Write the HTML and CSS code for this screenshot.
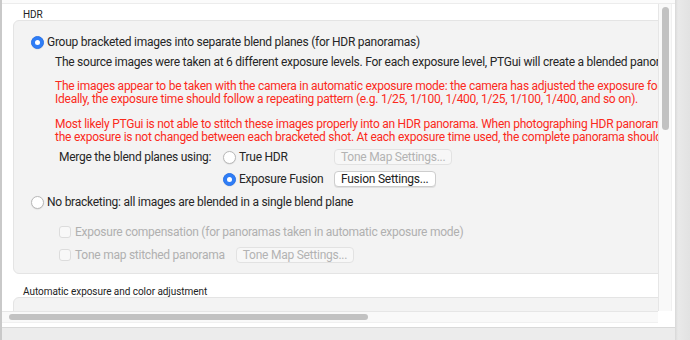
FILE: index.html
```html
<!DOCTYPE html>
<html>
<head>
<meta charset="utf-8">
<link rel="stylesheet" href="styles.css">
</head>
<body>
<div class="window">
  <div class="main">
    <div class="topline"></div>
    <div class="scrollarea">
      <div class="viewport">
        <div class="content">
          <div class="section-label">HDR</div>
          <div class="groupbox">
            <div class="row opt"><span class="radio on"></span><span>Group bracketed images into separate blend planes (for HDR panoramas)</span></div>
            <div class="info src">The source images were taken at 6 different exposure levels. For each exposure level, PTGui will create a blended panorama.</div>
            <div class="info warn first">The images appear to be taken with the camera in automatic exposure mode: the camera has adjusted the exposure for each shot.<br>Ideally, the exposure time should follow a repeating pattern (e.g. 1/25, 1/100, 1/400, 1/25, 1/100, 1/400, and so on).</div>
            <div class="info warn second">Most likely PTGui is not able to stitch these images properly into an HDR panorama. When photographing HDR panoramas, make sure<br>the exposure is not changed between each bracketed shot. At each exposure time used, the complete panorama should be covered.</div>
            <div class="merge">
              <span class="merge-label">Merge the blend planes using:</span>
              <span class="row"><span class="radio"></span><span>True HDR</span></span>
              <span class="btn disabled">Tone Map Settings...</span>
              <span></span>
              <span class="row"><span class="radio on"></span><span>Exposure Fusion</span></span>
              <span class="btn">Fusion Settings...</span>
            </div>
            <div class="row opt nobr"><span class="radio"></span><span>No bracketing: all images are blended in a single blend plane</span></div>
            <div class="row check expc"><span class="checkbox"></span><span>Exposure compensation (for panoramas taken in automatic exposure mode)</span></div>
            <div class="row check tmap"><span class="checkbox"></span><span>Tone map stitched panorama</span><span class="btn disabled">Tone Map Settings...</span></div>
          </div>
          <div class="section-label second">Automatic exposure and color adjustment</div>
          <div class="groupbox tall"></div>
        </div>
      </div>
      <div class="vscroll"><div class="vtrack"><div class="vthumb"></div></div></div>
    </div>
    <div class="hrow">
      <div class="htrack"><div class="hthumb"></div></div>
      <div class="corner"></div>
    </div>
    <div class="bottombar"></div>
  </div>
  <div class="rightedge"></div>
</div>
</body>
</html>
```

FILE: styles.css
```css
* { box-sizing: border-box; }
html, body { margin: 0; padding: 0; }
body {
  width: 690px;
  height: 340px;
  overflow: hidden;
  background: #fff;
  font-family: Roboto, "Liberation Sans", Arial, sans-serif;
  color: #262626;
}
.window {
  display: flex;
  width: 690px;
  height: 340px;
}
.main {
  width: 675px;
  height: 340px;
  display: flex;
  flex-direction: column;
  border-left: 2px solid #c9c9c9;
}
.topline {
  height: 4px;
  flex: none;
  background: #fbfbfb;
  border-bottom: 1px solid #ececec;
}
.scrollarea {
  height: 307px;
  flex: none;
  display: flex;
}
.viewport {
  width: 656px;
  height: 307px;
  overflow: hidden;
  background: #fff;
}
.content {
  width: 760px;
  padding-left: 11px;
}
.section-label {
  font-size: 10px;
  line-height: 11px;
  height: 11px;
  margin-top: 5px;
  padding-left: 10px;
  color: #222;
  letter-spacing: -0.05px;
}
.section-label.second { margin-top: 12px; }
.groupbox {
  width: 740px;
  background: #f3f3f3;
  border: 1px solid #e4e4e4;
  border-radius: 6px;
  padding: 14px 0 10px 0;
  font-size: 12px;
  line-height: 14px;
  letter-spacing: -0.25px;
  white-space: nowrap;
}
.groupbox.tall { height: 60px; }
.row {
  display: flex;
  align-items: center;
  height: 14px;
}
.opt { padding-left: 17px; gap: 3px; }
.radio {
  width: 13px;
  height: 13px;
  border-radius: 50%;
  background: #fff;
  border: 1px solid #b9b9b9;
  box-shadow: 0 0.5px 1px rgba(0,0,0,0.12);
  flex: none;
  display: flex;
  align-items: center;
  justify-content: center;
}
.radio.on {
  background: #2f7df6;
  border-color: #2a74ea;
}
.radio.on::after {
  content: "";
  width: 5px;
  height: 5px;
  border-radius: 50%;
  background: #fff;
}
.info { margin-left: 41px; }
.src { margin-top: 6px; }
.warn {
  color: #fb2a1c;
  line-height: 13px;
}
.warn.first { margin-top: 11px; }
.warn.second { margin-top: 12px; }
.merge {
  display: grid;
  grid-template-columns: 164px 111px auto;
  grid-auto-rows: 16px;
  row-gap: 6px;
  align-items: center;
  margin: 5px 0 0 45px;
}
.merge .row { gap: 3px; }
.btn {
  justify-self: start;
  height: 16px;
  padding: 0 6px;
  border: 1px solid #cdcdcd;
  border-radius: 4px;
  background: #fff;
  box-shadow: 0 1px 0.5px rgba(0,0,0,0.08);
  line-height: 14px;
  font-size: 12px;
  color: #222;
}
.btn.disabled {
  background: #f7f7f7;
  border-color: #e2e2e2;
  box-shadow: none;
  color: #b3b3b3;
}
.nobr { margin-top: 8px; }
.check {
  margin-left: 45px;
  gap: 4px;
  color: #b0b0b0;
}
.checkbox {
  width: 12px;
  height: 12px;
  border: 1px solid #dcdcdc;
  border-radius: 3px;
  background: #f8f8f8;
  flex: none;
}
.expc { margin-top: 16px; }
.tmap { margin-top: 8px; height: 16px; }
.tmap .btn { margin-left: 7px; }
.vscroll {
  width: 17px;
  height: 307px;
  padding-right: 3px;
  background: #fff;
}
.vtrack {
  height: 307px;
  background: #f9f9f9;
  border-left: 1px solid #e6e6e6;
  border-right: 1px solid #f0f0f0;
  padding: 3px 0 0 3px;
}
.vthumb {
  width: 7px;
  height: 123px;
  border-radius: 4px;
  background: #c2c2c2;
}
.hrow {
  height: 16px;
  flex: none;
  display: flex;
  background: #fff;
}
.htrack {
  width: 656px;
  height: 12px;
  background: #f9f9f9;
  border-top: 1px solid #e6e6e6;
  border-bottom: 1px solid #f0f0f0;
  padding: 2px 0 0 7px;
}
.hthumb {
  width: 359px;
  height: 6px;
  border-radius: 3px;
  background: #c2c2c2;
}
.corner { width: 17px; }
.bottombar {
  flex: 1;
  background: #ececec;
  border-top: 1px solid #d9d9d9;
}
.rightedge {
  width: 15px;
  height: 340px;
  background: linear-gradient(to right, #d8d8d8, #e9e9e9 3px, #e2e2e2);
}
```
